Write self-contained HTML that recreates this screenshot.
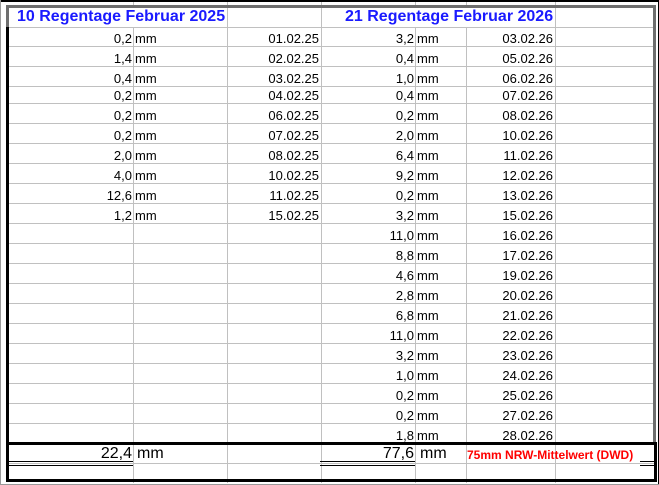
<!DOCTYPE html>
<html><head><meta charset="utf-8"><style>
*{margin:0;padding:0;box-sizing:border-box}
body{width:659px;height:485px;background:#fff;position:relative;overflow:hidden;font-family:"Liberation Sans",Arial,sans-serif;font-size:13px;color:#000}
.h{position:absolute;height:1px;background:#c0c0c0;left:6px;width:649px}
.v{position:absolute;width:1px;background:#c0c0c0;top:0px;height:483px}
.t{position:absolute;height:20px;line-height:20px;white-space:nowrap;top:1px}
.r{text-align:right}
.b{position:absolute;background:#000}
.g{position:absolute;background:#6e6e6e}
</style></head><body>
<!-- vertical grid -->
<div class="v" style="left:133px"></div>
<div class="v" style="left:227px"></div>
<div class="v" style="left:321px"></div>
<div class="v" style="left:415px"></div>
<div class="v" style="left:466px;"></div>
<div class="v" style="left:555px"></div>
<!-- header merged cells cover -->
<div style="position:absolute;left:9px;top:8px;width:218px;height:19px;background:#fff"></div>
<div style="position:absolute;left:322px;top:8px;width:233px;height:19px;background:#fff"></div>
<!-- outer frame -->
<div class="b" style="left:0;top:0;width:659px;height:2px"></div>
<div style="position:absolute;left:0;top:0;width:1px;height:485px;background:#9a9a9a"></div>
<div class="b" style="left:658px;top:0;width:1px;height:485px"></div>
<div style="position:absolute;left:0;top:484px;width:659px;height:1px;background:#9a9a9a"></div>
<!-- horizontal grid -->
<div class="h" style="top:27px"></div><div class="h" style="top:46px"></div><div class="h" style="top:66px"></div><div class="h" style="top:86px"></div><div class="h" style="top:103px"></div><div class="h" style="top:123px"></div><div class="h" style="top:143px"></div><div class="h" style="top:163px"></div><div class="h" style="top:183px"></div><div class="h" style="top:203px"></div><div class="h" style="top:223px"></div><div class="h" style="top:243px"></div><div class="h" style="top:263px"></div><div class="h" style="top:283px"></div><div class="h" style="top:303px"></div><div class="h" style="top:323px"></div><div class="h" style="top:343px"></div><div class="h" style="top:363px"></div><div class="h" style="top:383px"></div><div class="h" style="top:403px"></div><div class="h" style="top:423px"></div><div class="h" style="top:463px"></div>
<!-- gray inner frame -->
<div class="g" style="left:6px;top:5px;width:650px;height:3px"></div>
<div class="g" style="left:6px;top:5px;width:3px;height:24px"></div>
<div class="g" style="left:653px;top:5px;width:3px;height:440px"></div>
<div class="b" style="left:6px;top:27px;width:3px;height:418px"></div>
<!-- total box -->
<div class="b" style="left:6px;top:442px;width:651px;height:3px"></div>
<div class="b" style="left:6px;top:479px;width:651px;height:3px"></div>
<div class="b" style="left:6px;top:442px;width:3px;height:40px"></div>
<div class="b" style="left:654px;top:442px;width:3px;height:40px"></div>
<div class="b" style="left:9px;top:461px;width:124px;height:1px"></div>
<div class="b" style="left:9px;top:465px;width:124px;height:1px"></div>
<div class="b" style="left:320px;top:461px;width:95px;height:1px"></div>
<div class="b" style="left:320px;top:465px;width:95px;height:1px"></div>
<div class="b" style="left:640px;top:461px;width:14px;height:1px"></div>
<div class="b" style="left:640px;top:465px;width:14px;height:1px"></div>
<!-- headers -->
<div class="t" style="left:17px;top:7px;font-weight:bold;font-size:16px;color:#1a1aff">10 Regentage Februar 2025</div>
<div class="t" style="left:345px;top:7px;font-weight:bold;font-size:16px;color:#1a1aff">21 Regentage Februar 2026</div>
<!-- data -->
<div class="t r" style="left:9px;width:123px;top:29px">0,2</div><div class="t" style="left:135px;top:29px">mm</div><div class="t r" style="left:228px;width:91px;top:29px">01.02.25</div>
<div class="t r" style="left:9px;width:123px;top:49px">1,4</div><div class="t" style="left:135px;top:49px">mm</div><div class="t r" style="left:228px;width:91px;top:49px">02.02.25</div>
<div class="t r" style="left:9px;width:123px;top:69px">0,4</div><div class="t" style="left:135px;top:69px">mm</div><div class="t r" style="left:228px;width:91px;top:69px">03.02.25</div>
<div class="t r" style="left:9px;width:123px;top:86px">0,2</div><div class="t" style="left:135px;top:86px">mm</div><div class="t r" style="left:228px;width:91px;top:86px">04.02.25</div>
<div class="t r" style="left:9px;width:123px;top:106px">0,2</div><div class="t" style="left:135px;top:106px">mm</div><div class="t r" style="left:228px;width:91px;top:106px">06.02.25</div>
<div class="t r" style="left:9px;width:123px;top:126px">0,2</div><div class="t" style="left:135px;top:126px">mm</div><div class="t r" style="left:228px;width:91px;top:126px">07.02.25</div>
<div class="t r" style="left:9px;width:123px;top:146px">2,0</div><div class="t" style="left:135px;top:146px">mm</div><div class="t r" style="left:228px;width:91px;top:146px">08.02.25</div>
<div class="t r" style="left:9px;width:123px;top:166px">4,0</div><div class="t" style="left:135px;top:166px">mm</div><div class="t r" style="left:228px;width:91px;top:166px">10.02.25</div>
<div class="t r" style="left:9px;width:123px;top:186px">12,6</div><div class="t" style="left:135px;top:186px">mm</div><div class="t r" style="left:228px;width:91px;top:186px">11.02.25</div>
<div class="t r" style="left:9px;width:123px;top:206px">1,2</div><div class="t" style="left:135px;top:206px">mm</div><div class="t r" style="left:228px;width:91px;top:206px">15.02.25</div>

<div class="t r" style="left:322px;width:92px;top:29px">3,2</div><div class="t" style="left:417px;top:29px">mm</div><div class="t r" style="left:467px;width:86px;top:29px">03.02.26</div>
<div class="t r" style="left:322px;width:92px;top:49px">0,4</div><div class="t" style="left:417px;top:49px">mm</div><div class="t r" style="left:467px;width:86px;top:49px">05.02.26</div>
<div class="t r" style="left:322px;width:92px;top:69px">1,0</div><div class="t" style="left:417px;top:69px">mm</div><div class="t r" style="left:467px;width:86px;top:69px">06.02.26</div>
<div class="t r" style="left:322px;width:92px;top:86px">0,4</div><div class="t" style="left:417px;top:86px">mm</div><div class="t r" style="left:467px;width:86px;top:86px">07.02.26</div>
<div class="t r" style="left:322px;width:92px;top:106px">0,2</div><div class="t" style="left:417px;top:106px">mm</div><div class="t r" style="left:467px;width:86px;top:106px">08.02.26</div>
<div class="t r" style="left:322px;width:92px;top:126px">2,0</div><div class="t" style="left:417px;top:126px">mm</div><div class="t r" style="left:467px;width:86px;top:126px">10.02.26</div>
<div class="t r" style="left:322px;width:92px;top:146px">6,4</div><div class="t" style="left:417px;top:146px">mm</div><div class="t r" style="left:467px;width:86px;top:146px">11.02.26</div>
<div class="t r" style="left:322px;width:92px;top:166px">9,2</div><div class="t" style="left:417px;top:166px">mm</div><div class="t r" style="left:467px;width:86px;top:166px">12.02.26</div>
<div class="t r" style="left:322px;width:92px;top:186px">0,2</div><div class="t" style="left:417px;top:186px">mm</div><div class="t r" style="left:467px;width:86px;top:186px">13.02.26</div>
<div class="t r" style="left:322px;width:92px;top:206px">3,2</div><div class="t" style="left:417px;top:206px">mm</div><div class="t r" style="left:467px;width:86px;top:206px">15.02.26</div>
<div class="t r" style="left:322px;width:92px;top:226px">11,0</div><div class="t" style="left:417px;top:226px">mm</div><div class="t r" style="left:467px;width:86px;top:226px">16.02.26</div>
<div class="t r" style="left:322px;width:92px;top:246px">8,8</div><div class="t" style="left:417px;top:246px">mm</div><div class="t r" style="left:467px;width:86px;top:246px">17.02.26</div>
<div class="t r" style="left:322px;width:92px;top:266px">4,6</div><div class="t" style="left:417px;top:266px">mm</div><div class="t r" style="left:467px;width:86px;top:266px">19.02.26</div>
<div class="t r" style="left:322px;width:92px;top:286px">2,8</div><div class="t" style="left:417px;top:286px">mm</div><div class="t r" style="left:467px;width:86px;top:286px">20.02.26</div>
<div class="t r" style="left:322px;width:92px;top:306px">6,8</div><div class="t" style="left:417px;top:306px">mm</div><div class="t r" style="left:467px;width:86px;top:306px">21.02.26</div>
<div class="t r" style="left:322px;width:92px;top:326px">11,0</div><div class="t" style="left:417px;top:326px">mm</div><div class="t r" style="left:467px;width:86px;top:326px">22.02.26</div>
<div class="t r" style="left:322px;width:92px;top:346px">3,2</div><div class="t" style="left:417px;top:346px">mm</div><div class="t r" style="left:467px;width:86px;top:346px">23.02.26</div>
<div class="t r" style="left:322px;width:92px;top:366px">1,0</div><div class="t" style="left:417px;top:366px">mm</div><div class="t r" style="left:467px;width:86px;top:366px">24.02.26</div>
<div class="t r" style="left:322px;width:92px;top:386px">0,2</div><div class="t" style="left:417px;top:386px">mm</div><div class="t r" style="left:467px;width:86px;top:386px">25.02.26</div>
<div class="t r" style="left:322px;width:92px;top:406px">0,2</div><div class="t" style="left:417px;top:406px">mm</div><div class="t r" style="left:467px;width:86px;top:406px">27.02.26</div>
<div class="t r" style="left:322px;width:92px;top:426px">1,8</div><div class="t" style="left:417px;top:426px">mm</div><div class="t r" style="left:467px;width:86px;top:426px">28.02.26</div>
<!-- totals -->
<div class="t r" style="left:9px;width:123px;top:444px;font-size:16px">22,4</div><div class="t" style="left:137px;top:444px;font-size:16px">mm</div>
<div class="t r" style="left:322px;width:92px;top:444px;font-size:16px">77,6</div><div class="t" style="left:420px;top:444px;font-size:16px">mm</div>
<div class="t" style="left:467px;top:445px;font-size:12px;font-weight:bold;color:#ff0000">75mm NRW-Mittelwert (DWD)</div>
</body></html>
